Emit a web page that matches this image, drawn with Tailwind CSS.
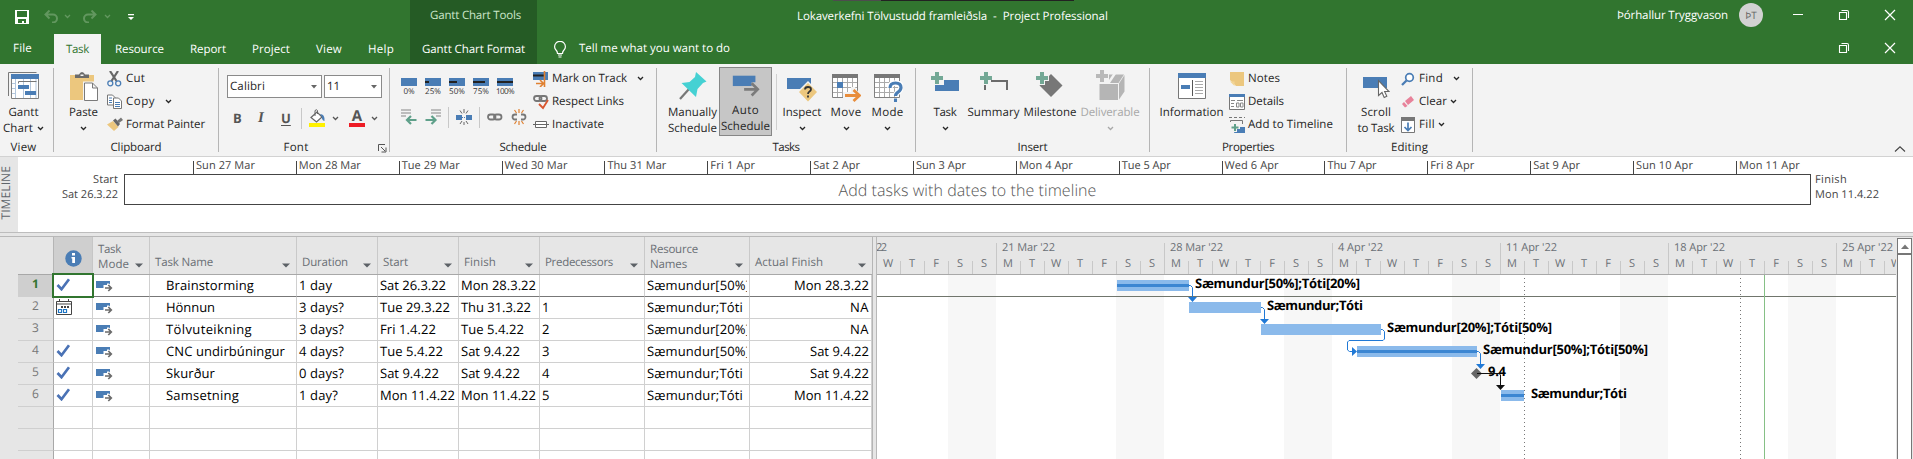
<!DOCTYPE html>
<html lang="en">
<head>
<meta charset="utf-8">
<title>Lokaverkefni Tölvustudd framleiðsla - Project Professional</title>
<script src="https://cdn.jsdelivr.net/npm/@tailwindcss/browser@4"></script>
</head>
<body class="w-[1913px] h-[459px] overflow-hidden flex flex-col bg-white font-['Open_Sans','Noto_Sans',sans-serif] text-[11.5px] leading-4 text-[#262626] whitespace-nowrap [text-rendering:geometricPrecision]">

<svg class="hidden">
  <symbol id="chev" viewBox="0 0 7 5"><path d="M1 1l2.5 2.5L6 1" fill="none" stroke="currentColor" stroke-width="1.3"/></symbol>
  <symbol id="restore" viewBox="0 0 12 12"><path d="M1.5 3.5h7v7h-7zM3.5 1.5h5.500q1.500 0 1.500 1.500V9" fill="none" stroke="#fff" stroke-width="1.1"/></symbol>
  <symbol id="close" viewBox="0 0 12 12"><path d="M1 1l10 10M11 1L1 11" fill="none" stroke="#fff" stroke-width="1.2"/></symbol>
  <symbol id="mode" viewBox="0 0 17 12"><path d="M0 1h14v7H0z" fill="#4a7db5"/><path d="M7.500 5h3.500V3.500h2L17.500 8.500 14 13H9V10H7.500z" fill="#fff"/><path d="M9 8h6M12.300 5l3 3-3 3" fill="none" stroke="#6b6b6b" stroke-width="1.700"/></symbol>
  <symbol id="check" viewBox="0 0 15 13"><path d="M1.500 7l4 4.200L13 1.300" fill="none" stroke="#4a72b5" stroke-width="2.700"/></symbol>
</svg>

<!-- Title bar and tabs -->
<header class="relative flex flex-col h-16 shrink-0 bg-[#31752f] text-white">
  <div class="absolute left-[833px] top-0 w-[48px] h-px bg-[#4d4d4d]"></div>
  <div class="absolute left-[881px] top-0 w-[193px] h-px bg-[#222]"></div>
  <div class="flex h-[34px]">
    <div class="flex w-[410px] pl-[15px] pt-[10px]">
      <svg class="w-[14px] h-[14px]" viewBox="0 0 14 14"><path d="M0 0h14v14H0z" fill="#fff"/><path d="M2 1h10v6H2zM3 9h8v4H9v-2H7v2H3z" fill="#31752f"/></svg>
      <svg class="w-[15px] h-[13px] ml-[15px]" viewBox="0 0 15 13"><path d="M5.500.5L1.500 4.500l4 4M1.500 4.500H9a4 4 0 0 1 0 8H8" fill="none" stroke="#62975f" stroke-width="2"/></svg>
      <svg class="w-[7px] h-[5px] ml-[5px] mt-1 text-[#62975f]"><use href="#chev"/></svg>
      <svg class="w-[15px] h-[13px] ml-[11px]" viewBox="0 0 15 13"><path d="M9.500.5l4 4-4 4M13.500 4.500H6a4 4 0 0 0 0 8h1" fill="none" stroke="#62975f" stroke-width="2"/></svg>
      <svg class="w-[7px] h-[5px] ml-[7px] mt-1 text-[#62975f]"><use href="#chev"/></svg>
      <svg class="w-[6px] h-[7px] ml-[17px] mt-1" viewBox="0 0 6 7"><path d="M0 0h6v1.200H0zM0 3h6L3 6z" fill="#fff"/></svg>
    </div>
    <div class="w-[127px] bg-[#255b25] pl-5 pt-2 text-[#cbe6ca]"><span data-w="90">Gantt Chart Tools</span></div>
    <div class="w-[1080px] pl-[260px] pt-[9px] flex"><span data-w="189">Lokaverkefni Tölvustudd framleiðsla</span><span class="ml-[6px]">-</span><span class="ml-[6px]" data-w="104">Project Professional</span></div>
    <div class="flex pt-[3px]">
      <span class="pt-[5px] w-[122px]"><span data-w="110">Þórhallur Tryggvason</span></span>
      <div class="size-6 rounded-full bg-[#d2d2d2] text-[#666] text-[10px] leading-6 text-center">ÞT</div>
      <div class="w-[10px] h-px bg-white mt-[11px] ml-[30px]"></div>
      <svg class="size-3 ml-[35px] mt-[6px]"><use href="#restore"/></svg>
      <svg class="size-3 ml-[34px] mt-[6px]"><use href="#close"/></svg>
    </div>
  </div>
  <div class="flex h-[30px]">
    <div class="w-[54px] pl-[13px] pt-[7px]"><span data-w="18">File</span></div>
    <div class="w-[47px] pl-3 pt-2 bg-[#f3f3f3] text-[#31752f]"><span data-w="22">Task</span></div>
    <div class="w-[75px] pl-[14px] pt-2"><span data-w="48">Resource</span></div>
    <div class="w-[62px] pl-[14px] pt-2"><span data-w="35">Report</span></div>
    <div class="w-[64px] pl-[14px] pt-2"><span data-w="37">Project</span></div>
    <div class="w-[52px] pl-[14px] pt-2"><span data-w="25">View</span></div>
    <div class="w-[56px] pl-[14px] pt-2"><span data-w="25">Help</span></div>
    <div class="w-[127px] pl-3 pt-2 bg-[#255b25]"><span data-w="102">Gantt Chart Format</span></div>
    <svg class="w-3 h-[17px] ml-[17px] mt-[7px]" viewBox="0 0 12 17"><path d="M3.500 12.500Q3.500 10.500 2 9 .6 7.500.6 5.700a5.200 5.200 0 0 1 10.800 0Q11.400 7.500 10 9 8.500 10.500 8.500 12.500zM4 14h4M4.500 16h3" fill="none" stroke="#fff" stroke-width="1.200"/></svg>
    <div class="ml-[13px] pt-[7px] w-[1260px]"><span data-w="150">Tell me what you want to do</span></div>
    <svg class="size-3 mt-[8px] -ml-px"><use href="#restore"/></svg>
    <svg class="size-3 ml-[34px] mt-[8px]"><use href="#close"/></svg>
  </div>
</header>

<!-- Ribbon -->
<section class="relative flex h-[93px] shrink-0 bg-[#f3f3f3] border-b border-[#d2d2d2]">
  <!-- View -->
  <div class="w-[53px] flex flex-col">
    <div class="flex flex-col w-[47px] h-[76px] items-center pt-[7px]">
      <svg class="w-[32px] h-[34px]" viewBox="0 0 32 34"><path d="M.5 25V1.500h28" fill="none" stroke="#7a7a7a"/><path d="M3.500 3.500h27v24h-27z" fill="#fff" stroke="#808080"/><path d="M3 3h28v5H3z" fill="#4a7db5"/><path d="M7.500 8v19M4 12.500h4M4 17.500h4M4 22.500h4M15.500 8v19M22.500 8v19M28 8v19" stroke="#b3c7dd" fill="none"/><path d="M10.500 12.500v-2h18" fill="none" stroke="#777"/><path d="M10 14h11v4H10zM17 20h11v4H17z" fill="#4a7db5"/></svg>
      <span data-w="29">Gantt</span>
      <span class="flex"><span data-w="29">Chart</span><svg class="w-[7px] h-[5px] ml-1 mt-[5px]"><use href="#chev"/></svg></span>
    </div>
    <div class="w-[47px] text-center"><span data-w="25">View</span></div>
  </div>
  <div class="w-px h-[84px] mt-1 bg-[#b5b5b5]"></div>
  <!-- Clipboard -->
  <div class="w-[164px] flex flex-col">
    <div class="flex h-[76px]">
      <div class="flex flex-col w-[53px] pl-[6px] items-center pt-[7px]">
        <svg class="w-[30px] h-[34px]" viewBox="0 0 30 34"><path d="M1 4h24v25H1z" fill="#ecc77e"/><path d="M6 7V3.500h4Q11 1 13 1t3 2.500h4V7z" fill="#6b6b6b"/><path d="M11.500 3.500h3v1.500h-3z" fill="#f3f3f3"/><path d="M14 10.500h14v20H14z" fill="#f3f3f3"/><path d="M15.500 12h8l5 5v12.500h-13zM23.500 12v5h5" fill="#fff" stroke="#7a7a7a"/></svg>
        <span data-w="28">Paste</span>
        <svg class="w-[7px] h-[5px] mt-[5px]"><use href="#chev"/></svg>
      </div>
      <div class="flex flex-col pt-[3px]">
        <div class="flex h-[23px] items-center"><svg class="w-[15px] h-[16px] mr-1" viewBox="0 0 15 16"><path d="M3 0l6.500 10M11 0L4.500 10" stroke="#666" stroke-width="2.200" fill="none"/><circle cx="3.300" cy="12.300" r="2.500" fill="none" stroke="#4a7db5" stroke-width="1.300"/><circle cx="11.200" cy="12.300" r="2.500" fill="none" stroke="#4a7db5" stroke-width="1.300"/></svg><span data-w="18">Cut</span></div>
        <div class="flex h-[23px] items-center"><svg class="w-[15px] h-[15px] mr-1" viewBox="0 0 15 15"><path d="M.5 1h5L8 3.500V11H.5z" fill="#fff" stroke="#777"/><path d="M6.500 4h5l3 3v7.500h-8z" fill="#fff" stroke="#777"/><path d="M2 4h3M2 6.500h3M2 8.500h3M8 8.500h5M8 10.500h5M8 12.500h5" stroke="#4a7db5"/></svg><span data-w="28">Copy</span><svg class="w-[7px] h-[5px] ml-[10px]"><use href="#chev"/></svg></div>
        <div class="flex h-[23px] items-center"><svg class="w-[16px] h-[15px] mr-[3px]" viewBox="0 0 16 15"><path d="M0 7.500l6-3.500 5.500 6L7 14z" fill="#ecc77e"/><path d="M6 3.500l2.500-2L13 7l-2 2.500z" fill="#666"/><path d="M10 4l4-3.500L16 3l-4 3z" fill="#777"/></svg><span data-w="78">Format Painter</span></div>
      </div>
    </div>
    <div class="text-center"><span data-w="50">Clipboard</span></div>
  </div>
  <div class="w-px h-[84px] mt-1 bg-[#b5b5b5]"></div>
  <!-- Font -->
  <div class="w-[170px] flex flex-col">
    <div class="flex flex-col h-[76px] pl-2 pt-[11px]">
      <div class="flex gap-[2px]">
        <div class="flex items-center justify-between w-[95px] h-[23px] border border-[#8a8a8a] bg-white pl-[2px] pr-1"><span data-w="34">Calibri</span><svg class="w-[6px] h-[4px]" viewBox="0 0 6 4"><path d="M0 0h6L3 3.500z" fill="#666"/></svg></div>
        <div class="flex items-center justify-between w-[58px] h-[23px] border border-[#8a8a8a] bg-white pl-[2px] pr-1"><span data-w="12">11</span><svg class="w-[6px] h-[4px]" viewBox="0 0 6 4"><path d="M0 0h6L3 3.500z" fill="#666"/></svg></div>
      </div>
      <div class="flex mt-[9px] h-[22px] text-[#555] items-center">
        <span class="w-[25px] pl-[6px] font-bold text-[13px]">B</span>
        <span class="w-[24px] pl-[6px] font-['Liberation_Serif',serif] font-bold italic text-[15px]">I</span>
        <span class="w-[25px] pl-[5px] font-bold text-[13px] underline underline-offset-2">U</span>
        <div class="w-px h-[21px] bg-[#c8c8c8]"></div>
        <svg class="w-[17px] h-[18px] ml-[7px]" viewBox="0 0 17 18"><path d="M2 8.500L8 3l5 5-5.500 5z" fill="#fff" stroke="#666" stroke-width="1.200"/><path d="M6 7V1.500q2-1.500 2.500 0V5" fill="none" stroke="#666"/><path d="M11 5q5 0 4.500 7-3-1-2.500-4z" fill="#4a7db5"/><path d="M0 14h16v4H0z" fill="#fff100"/></svg>
        <svg class="w-[7px] h-[5px] ml-[6px]"><use href="#chev"/></svg>
        <div class="flex flex-col items-center w-4 h-[18px] ml-[10px] border-b-4 border-[#ee1c25] font-bold text-[15px] leading-[15px]">A</div>
        <svg class="w-[7px] h-[5px] ml-[6px]"><use href="#chev"/></svg>
      </div>
    </div>
    <div class="flex"><div class="w-[154px] text-center"><span data-w="24">Font</span></div><svg class="w-[9px] h-[9px] ml-[5px] mt-1" viewBox="0 0 9 9"><path d="M.5 7V.5H7M3 3l4 4M8 3.500V8H3.500" fill="none" stroke="#555"/></svg></div>
  </div>
  <div class="w-px h-[84px] mt-1 bg-[#b5b5b5]"></div>
  <!-- Schedule -->
  <div class="w-[266px] flex flex-col">
    <div class="flex h-[76px]">
      <div class="w-[143px] pl-[11px] pt-[14px]">
        <div class="flex gap-2 h-[20px]" id="pct"></div>
        <div class="flex items-center mt-[8px] h-[22px]">
          <svg class="w-4 h-4" viewBox="0 0 16 16"><path d="M0 1h10M0 4h10M0 7h5" stroke="#888" stroke-width="1.200"/><path d="M15.500 11H6M10 7l-4 4 4 4" fill="none" stroke="#5fa08a" stroke-width="2.200"/></svg>
          <svg class="w-4 h-4 ml-2" viewBox="0 0 16 16"><path d="M6 1h10M6 4h10M11 7h5" stroke="#888" stroke-width="1.200"/><path d="M.5 11H10M6.500 7l4 4-4 4" fill="none" stroke="#5fa08a" stroke-width="2.200"/></svg>
          <div class="w-px h-[21px] bg-[#c8c8c8] ml-[7px]"></div>
          <svg class="w-4 h-4 ml-[7px]" viewBox="0 0 16 16"><path d="M0 6h6v5H0zM10 6h6v5h-6z" fill="#4a7db5"/><path d="M6 8.500h4" stroke="#4a7db5" stroke-dasharray="1 1"/><path d="M8 0v4M4 1.500l2 3M12 1.500l-2 3M8 16v-3M4 15l2-3M12 15l-2-3" stroke="#666"/></svg>
          <div class="w-px h-[21px] bg-[#c8c8c8] ml-[7px]"></div>
          <svg class="w-4 h-4 ml-[7px]" viewBox="0 0 16 16"><rect x="1" y="5.500" width="7.500" height="5" rx="2.500" fill="none" stroke="#777" stroke-width="1.800"/><rect x="7" y="5.500" width="7.500" height="5" rx="2.500" fill="none" stroke="#777" stroke-width="1.800"/></svg>
          <svg class="w-4 h-4 ml-2" viewBox="0 0 16 16"><path d="M6 5.500H4a2.500 2.500 0 0 0 0 5h2M10 5.500h2a2.500 2.500 0 0 1 0 5h-2" fill="none" stroke="#777" stroke-width="1.800"/><path d="M8 0v4M3.500 1l2 3M12.500 1l-2 3M8 16v-4M3.500 15l2-3M12.500 15l-2-3" stroke="#e08030" stroke-width="1.200"/></svg>
        </div>
      </div>
      <div class="flex flex-col pt-[3px]">
        <div class="flex h-[23px] items-center"><svg class="w-4 h-4 mr-[3px]" viewBox="0 0 16 16"><path d="M0 1h15v8H0z" fill="#4a7db5"/><path d="M0 4.500h12" stroke="#222" stroke-width="2"/><path d="M11.500 0v16M3 12.500h7M7 9l3.500 3.500L7 16" fill="none" stroke="#e08030" stroke-width="1.600"/></svg><span data-w="74">Mark on Track</span><svg class="w-[7px] h-[5px] ml-[10px]"><use href="#chev"/></svg></div>
        <div class="flex h-[23px] items-center"><svg class="w-4 h-4 mr-[3px]" viewBox="0 0 16 16"><rect x="1" y="2" width="7.500" height="5" rx="2.500" fill="none" stroke="#777" stroke-width="1.800"/><rect x="6.500" y="2" width="7.500" height="5" rx="2.500" fill="none" stroke="#777" stroke-width="1.800"/><path d="M6 10l4 4 5-8" fill="none" stroke="#d9562f" stroke-width="1.800"/></svg><span data-w="71">Respect Links</span></div>
        <div class="flex h-[23px] items-center"><svg class="w-4 h-4 mr-[3px]" viewBox="0 0 16 16"><path d="M0 7.500h16M2.500 4.500h11v6h-11z" fill="#fff" stroke="#666"/><path d="M2.500 7.500h11" stroke="#666"/></svg><span data-w="51">Inactivate</span></div>
      </div>
    </div>
    <div class="text-center"><span data-w="46">Schedule</span></div>
  </div>
  <div class="w-px h-[84px] mt-1 bg-[#b5b5b5]"></div>
  <!-- Tasks -->
  <div class="w-[258px] flex flex-col">
    <div class="flex h-[76px] pl-[9px]">
      <div class="flex flex-col w-[53px] items-center pt-[7px]">
        <svg class="w-[28px] h-[34px]" viewBox="0 0 28 34"><path d="M1 28L10 18" stroke="#777" stroke-width="2.200"/><path d="M17 1L27.500 10.500 24 12 18.500 18 17 26 2.500 12 10.500 11 16 6z" fill="#45d1d3"/></svg>
        <span data-w="48">Manually</span><span data-w="48">Schedule</span>
      </div>
      <div class="flex flex-col w-[53px] h-[69px] mt-[3px] items-center pt-[3px] border border-[#868686] bg-[#c6c6c6]">
        <svg class="w-[28px] h-[34px]" viewBox="0 0 28 34"><path d="M0 5h24v11H0z" fill="#4a7db5"/><path d="M11 16h9v-4h5v5H11z" fill="#c6c6c6"/><path d="M12 19.500h14M20 13l6.500 6.500L20 26" fill="none" stroke="#7b7b7b" stroke-width="2.800"/></svg>
        <span data-w="26">Auto</span><span data-w="48">Schedule</span>
      </div>
      <div class="w-px h-[56px] mt-[10px] ml-1 bg-[#d0d0d0]"></div>
      <div class="flex flex-col w-[50px] items-center pt-[7px]">
        <svg class="w-[30px] h-[34px]" viewBox="0 0 30 34"><path d="M0 7h24v11H0z" fill="#4a7db5"/><path d="M21 10l11 11-11 11-11-11z" fill="#f3f3f3"/><path d="M21 12l9 9-9 9.500-9-9.500z" fill="#ecc77e"/><path d="M18 18.500q0-2.500 3-2.500t3 2.300q0 1.300-1.500 2.200T21 23M21 24.500v2" fill="none" stroke="#333" stroke-width="1.800"/></svg>
        <span data-w="38">Inspect</span><svg class="w-[7px] h-[5px] mt-[5px]"><use href="#chev"/></svg>
      </div>
      <div class="flex flex-col w-[38px] items-center pt-[7px]">
        <svg class="w-[30px] h-[34px]" viewBox="0 0 30 34"><path d="M1.500 5.500h25v21h-25z" fill="#fff" stroke="#808080"/><path d="M1 3h26v4H1z" fill="#777"/><path d="M6.500 7v19M11.500 7v19M16.500 7v19M21.500 7v19M2 11.500h24M2 16.500h24M2 21.500h24" stroke="#aaa"/><path d="M6 11h6v6H6z" fill="#4a7db5"/><path d="M12 21h8v-5h4l5 8-5 7h-5v-4h-7z" fill="#f3f3f3"/><path d="M14 24.500h14M22.500 19l6 5.500-6 5.500" fill="none" stroke="#e88d3c" stroke-width="2.800"/></svg>
        <span data-w="30">Move</span><svg class="w-[7px] h-[5px] mt-[5px]"><use href="#chev"/></svg>
      </div>
      <div class="flex flex-col w-[45px] items-center pt-[7px]">
        <svg class="w-[30px] h-[34px]" viewBox="0 0 30 34"><path d="M1.500 5.500h25v21h-25z" fill="#fff" stroke="#808080"/><path d="M1 3h26v4H1z" fill="#777"/><path d="M6.500 7v19M11.500 7v19M16.500 7v19M21.500 7v19M2 11.500h24M2 16.500h24M2 21.500h24" stroke="#aaa"/><path d="M17 17q0-5 5.500-5t5.500 4.500q0 2.500-2.800 4.500T22.500 25M22.500 27v4" fill="none" stroke="#fff" stroke-width="5.500"/><path d="M17 17q0-5 5.500-5t5.500 4.500q0 2.500-2.800 4.500T22.500 25M22.500 27.500v3.500" fill="none" stroke="#4a7db5" stroke-width="3.200"/></svg>
        <span data-w="31">Mode</span><svg class="w-[7px] h-[5px] mt-[5px]"><use href="#chev"/></svg>
      </div>
    </div>
    <div class="text-center"><span data-w="26">Tasks</span></div>
  </div>
  <div class="w-px h-[84px] mt-1 bg-[#b5b5b5]"></div>
  <!-- Insert -->
  <div class="w-[233px] flex flex-col">
    <div class="flex h-[76px] pl-[8px]">
      <div class="flex flex-col w-[42px] items-center pt-[7px]">
        <svg class="w-[30px] h-[34px]" viewBox="0 0 30 34"><path d="M5 9h24v11H5z" fill="#4a7db5"/><path d="M5 9h9v5H5z" fill="#f3f3f3"/><path d="M5 1h4v4h4v4H9v4H5V9H1V5h4z" fill="#73a895"/></svg>
        <span data-w="22">Task</span><svg class="w-[7px] h-[5px] mt-[5px]"><use href="#chev"/></svg>
      </div>
      <div class="flex flex-col w-[55px] items-center pt-[7px]">
        <svg class="w-[30px] h-[34px]" viewBox="0 0 30 34"><path d="M6 19v-9h22v9" fill="none" stroke="#6b6b6b" stroke-width="2"/><path d="M3 0h9v14H3z" fill="#f3f3f3"/><path d="M5 1h4v4h4v4H9v4H5V9H1V5h4z" fill="#73a895"/><path d="M5 14h2v5H5z" fill="#6b6b6b"/></svg>
        <span data-w="51">Summary</span>
      </div>
      <div class="flex flex-col w-[58px] items-center pt-[7px]">
        <svg class="w-[30px] h-[34px]" viewBox="0 0 30 34"><path d="M16 3l11.500 11.500L16 26 4.500 14.500z" fill="#777"/><path d="M4 0h6v4h4v6h-4v4H3V0z" fill="#f3f3f3"/><path d="M5 1h4v4h4v4H9v4H5V9H1V5h4z" fill="#73a895"/></svg>
        <span data-w="52">Milestone</span>
      </div>
      <div class="flex flex-col w-[62px] items-center pt-[5px] text-[#a8a8a8]">
        <svg class="w-[30px] h-[36px]" viewBox="0 0 30 36"><path d="M4.500 14l5.500-8.500h19l-5.500 8.500zM4.500 15h18.500v16H4.500zM24 14.500l5.500-8.500v16.500L24 30.500z" fill="#b5b5b5"/><path d="M12 14l6-9h3l-6 9z" fill="#f3f3f3"/><path d="M0 0h14v14H2z" fill="#f3f3f3"/><path d="M5 1h4v4h4v4H9v4H5V9H1V5h4z" fill="#b9b9b9"/></svg>
        <span data-w="58">Deliverable</span><svg class="w-[7px] h-[5px] mt-[5px]"><use href="#chev"/></svg>
      </div>
    </div>
    <div class="text-center"><span data-w="29">Insert</span></div>
  </div>
  <div class="w-px h-[84px] mt-1 bg-[#b5b5b5]"></div>
  <!-- Properties -->
  <div class="w-[196px] flex flex-col">
    <div class="flex h-[76px] pl-[8px]">
      <div class="flex flex-col w-[67px] items-center pt-[7px]">
        <svg class="w-[28px] h-[34px]" viewBox="0 0 28 34"><path d="M.5 2.500h27v25H.5z" fill="#fff" stroke="#777"/><path d="M0 2h28v5H0z" fill="#4a7db5"/><path d="M3 14h9v4H3z" fill="#4a7db5"/><path d="M14.500 9v16" stroke="#555"/><path d="M17 10.500h8M17 13.500h8M17 16.500h8M17 19.500h8M17 22.500h8" stroke="#aaa"/></svg>
        <span data-w="63">Information</span>
      </div>
      <div class="flex flex-col pt-[3px] pl-1">
        <div class="flex h-[23px] items-center"><svg class="w-4 h-4 mr-[3px]" viewBox="0 0 16 16"><path d="M1 1h14v14H7l-6-6z" fill="#ecc77e"/><path d="M1 10.500h4.500V15z" fill="#f2d597"/></svg><span data-w="31">Notes</span></div>
        <div class="flex h-[23px] items-center"><svg class="w-4 h-4 mr-[3px]" viewBox="0 0 16 16"><path d="M.5.5h15v15H.5z" fill="#fff" stroke="#777"/><path d="M0 0h16v3H0z" fill="#4a7db5"/><path d="M2 6.500h4M8 6.500h6M2 9.500h3M2 12.500h3M7.500 9h2.500v4H7.500zM11.500 9H14v4h-2.500z" fill="none" stroke="#888"/></svg><span data-w="35">Details</span></div>
        <div class="flex h-[23px] items-center"><svg class="w-4 h-4 mr-[3px]" viewBox="0 0 16 16"><path d="M0 .5h16" stroke="#777" stroke-dasharray="3 2"/><path d="M1.500 5V3.500h12V7" fill="none" stroke="#777"/><path d="M7 10h9v6H5z" fill="#4a7db5"/><path d="M4 5h4v3h3v4H8v3H4v-3H1V8h3z" fill="#f3f3f3"/><path d="M5 7h2v2.500h2.500v2H7V14H5v-2.500H2.500v-2H5z" fill="#5fa08a"/></svg><span data-w="84">Add to Timeline</span></div>
      </div>
    </div>
    <div class="text-center"><span data-w="51">Properties</span></div>
  </div>
  <div class="w-px h-[84px] mt-1 bg-[#b5b5b5]"></div>
  <!-- Editing -->
  <div class="w-[125px] flex flex-col">
    <div class="flex h-[76px] pl-[8px]">
      <div class="flex flex-col w-[42px] items-center pt-[7px]">
        <svg class="w-[28px] h-[34px]" viewBox="0 0 28 34"><path d="M1 6h24v11H1z" fill="#4a7db5"/><path d="M16.500 9.500v15l3.500-3 2.200 5 2.600-1.200-2.200-4.800H27z" fill="#fff" stroke="#666" stroke-width="1.100"/></svg>
        <span data-w="29">Scroll</span><span data-w="36">to Task</span>
      </div>
      <div class="flex flex-col pt-[3px] pl-1">
        <div class="flex h-[23px] items-center"><svg class="w-[14px] h-[14px] mr-1" viewBox="0 0 14 14"><circle cx="8.500" cy="5.500" r="3.800" fill="#fff" stroke="#4a7db5" stroke-width="1.700"/><path d="M5.500 8.500L1 13" stroke="#4a7db5" stroke-width="2.300"/></svg><span data-w="23">Find</span><svg class="w-[7px] h-[5px] ml-[10px]"><use href="#chev"/></svg></div>
        <div class="flex h-[23px] items-center"><svg class="w-[14px] h-[14px] mr-1" viewBox="0 0 14 14"><path d="M4 6l6-5 3 4-6 5z" fill="#e8829a"/><path d="M3 7l3.500 4-2.500 1.500L1 9z" fill="#e8829a"/></svg><span data-w="27">Clear</span><svg class="w-[7px] h-[5px] ml-[3px]"><use href="#chev"/></svg></div>
        <div class="flex h-[23px] items-center"><svg class="w-[14px] h-[16px] mr-1" viewBox="0 0 14 16"><path d="M.5.5h13v15H.5z" fill="#fff" stroke="#777"/><path d="M0 0h14v4H0z" fill="#777"/><path d="M7 5.500v8M3.500 10L7 13.500 10.500 10" fill="none" stroke="#4a7db5" stroke-width="1.700"/></svg><span data-w="15">Fill</span><svg class="w-[7px] h-[5px] ml-[3px]"><use href="#chev"/></svg></div>
      </div>
    </div>
    <div class="text-center"><span data-w="36">Editing</span></div>
  </div>
  <div class="w-px h-[84px] mt-1 bg-[#b5b5b5]"></div>
  <svg class="w-[12px] h-[6px] mt-[82px] ml-[421px]" viewBox="0 0 12 6"><path d="M1 5.500L6 .8l5 4.700" fill="none" stroke="#444" stroke-width="1.100"/></svg>
</section>

<!-- Timeline -->
<section class="flex h-[76px] shrink-0 border-b border-[#bdbdbd] text-[#444] text-[11px]">
  <div class="w-[18px] bg-[#e6e6e6] flex items-start justify-center pt-[9px] pr-[7px]">
    <span class="[writing-mode:vertical-rl] rotate-180 text-[12px] leading-[14px] tracking-[0.1px] text-[#5f656b]">TIMELINE</span>
  </div>
  <div class="w-[106px] pt-[15px] pr-[6px] text-right leading-[15px]"><div><span data-w="24">Start</span></div><div><span data-w="55">Sat 26.3.22</span></div></div>
  <div class="w-[1687px] flex flex-col">
    <div id="ticks" class="flex h-[17px] pl-[69px] pt-1"></div>
    <div class="h-[31px] border border-[#444] text-center text-[#555] font-light text-[16px] leading-[31px]"><span data-w="257">Add tasks with dates to the timeline</span></div>
  </div>
  <div class="pt-[15px] pl-1 leading-[15px]"><div><span data-w="31">Finish</span></div><div><span data-w="63">Mon 11.4.22</span></div></div>
</section>
<div class="h-[4px] shrink-0 bg-[#e6e6e6] border-b border-[#b8b8b8]"></div>

<!-- Sheet and chart -->
<main class="flex h-[222px] shrink-0">
  <div class="w-[18px] bg-[#e6e6e6]"></div>
  <div class="relative w-[855px] border-r border-[#b5b5b5] overflow-hidden">
    <div id="head" class="grid grid-cols-[36px_39px_57px_147px_81px_81px_81px_105px_105px_122px] h-[38px] bg-[#e6e6e6] border-b border-[#a8a8a8] text-[#6a6f75] leading-[15px]"></div>
    <div id="rows"></div>
    <div class="absolute left-[34px] top-[36px] w-[42px] h-[25px] border-2 border-[#31752f]"></div>
  </div>
  <div class="w-[4px] bg-[#e6e6e6] border-r border-[#b8b8b8]"></div>
  <div class="w-[1019px] flex flex-col overflow-hidden">
    <div class="h-[38px] shrink-0 bg-[#e6e6e6] border-b border-[#a8a8a8]"><svg id="scale" class="block w-[1019px] h-[37px] text-[11px]" viewBox="877 237 1019 37" fill="#6a6f75"></svg></div>
    <svg id="chart" class="block w-[1019px] h-[184px] shrink-0" viewBox="877 275 1019 184"></svg>
  </div>
  <div class="w-[17px] pl-px pt-[1px] bg-[#e6e6e6]">
    <div class="w-[15px] h-[16px] border border-[#777] bg-white flex justify-center items-center"><svg class="w-[8px] h-[5px]" viewBox="0 0 8 5"><path d="M0 5h8L4 .5z" fill="#777"/></svg></div>
    <div class="w-[15px] h-[205px] border border-b-0 border-[#777] bg-white"></div>
  </div>
</main>

<script>
const $ = id => document.getElementById(id);

$("pct").innerHTML = [["0%",0,10],["25%",4,15],["50%",8,15],["75%",12,15],["100%",16,17]].map(([t,b,w]) =>
  `<div class="flex flex-col items-center w-4"><svg class="w-4 h-2 shrink-0" viewBox="0 0 16 8"><path d="M0 0h16v8H0z" fill="#4a7db5"/><path d="M0 3h${b}v2H0z" fill="#222"/></svg><span class="text-[8px] leading-[11px] text-[#333]" data-w="${w}">${t}</span></div>`).join("");

$("ticks").innerHTML = [["Sun 27 Mar",58],["Mon 28 Mar",61],["Tue 29 Mar",57],["Wed 30 Mar",62],["Thu 31 Mar",58],["Fri 1 Apr",44],["Sat 2 Apr",46],["Sun 3 Apr",49],["Mon 4 Apr",53],["Tue 5 Apr",48],["Wed 6 Apr",53],["Thu 7 Apr",48],["Fri 8 Apr",43],["Sat 9 Apr",46],["Sun 10 Apr",56],["Mon 11 Apr",60]].map(([t,w]) =>
  `<div class="w-[102.87px] shrink-0 border-l border-[#444] pl-[2px] leading-[9px]"><span data-w="${w}">${t}</span></div>`).join("");

const arrow = `<svg class="w-[8px] h-[5px] mb-[6px] mr-[6px] shrink-0" viewBox="0 0 8 5"><path d="M0 .5h8L4 4.500z" fill="#5c6166"/></svg>`;
$("head").innerHTML = `<div class="border-r border-[#b5b5b5]"></div><div class="border-r border-[#c6c6c6] bg-[#cfcfcf] flex justify-center pt-[13px]"><svg class="w-[17px] h-[17px]" viewBox="0 0 17 17"><circle cx="8.500" cy="8.500" r="8.200" fill="#4a7db5"/><path d="M7 3h3v2.500H7zM6.500 7H10v6H7.200V8.500h-.7z" fill="#fff"/></svg></div>` +
 [["Task",22,"Mode",30],["Task Name",57],["Duration",45],["Start",24],["Finish",31],["Predecessors",67],["Resource",47,"Names",36],["Actual Finish",67]].map(([a,w,b,v]) =>
  `<div class="border-r border-[#c9c9c9] last:border-r-0 flex justify-between items-end pl-[5px]"><div class="${b ? "pb-[2px]" : "pb-[4px]"}"><div><span data-w="${w}">${a}</span></div>${b ? `<div><span data-w="${v}">${b}</span></div>` : ""}</div>${arrow}</div>`).join("");

const cal = `<svg class="w-4 h-4 mb-[2px]" viewBox="0 0 16 16"><path d="M.5 2.500h15v13H.5zM.5 5h15M3.500 0v3M12.500 0v3" fill="#fff" stroke="#444"/><path d="M5 7h2v2H5zM8 7h2v2H8zM11 7h2v2h-2z" fill="#444"/><path d="M2.500 10.500h3v3h-3zM7.500 10.500h3v3h-3z" fill="none" stroke="#1c74c4" stroke-width="1.200"/></svg>`;
const chk = `<svg class="w-[15px] h-[13px] mb-[2px]"><use href="#check"/></svg>`;
const data = [
 [chk,"Brainstorming",87,"1 day",32,"Sat 26.3.22",65,"Mon 28.3.22",74,"","Sæmundur[50%]",102,"Mon 28.3.22",74],
 [cal,"Hönnun",48,"3 days?",44,"Tue 29.3.22",69,"Thu 31.3.22",69,"1","Sæmundur;Tóti",95,"NA",18],
 ["","Tölvuteikning",85,"3 days?",44,"Fri 1.4.22",55,"Tue 5.4.22",62,"2","Sæmundur[20%]",102,"NA",18],
 [chk,"CNC undirbúningur",118,"4 days?",44,"Tue 5.4.22",62,"Sat 9.4.22",58,"3","Sæmundur[50%]",102,"Sat 9.4.22",58],
 [chk,"Skurður",48,"0 days?",44,"Sat 9.4.22",58,"Sat 9.4.22",58,"4","Sæmundur;Tóti",95,"Sat 9.4.22",58],
 [chk,"Samsetning",72,"1 day?",38,"Mon 11.4.22",74,"Mon 11.4.22",74,"5","Sæmundur;Tóti",95,"Mon 11.4.22",74],
 [],[],[]];
const s = (t,w) => t ? `<span data-w="${w}">${t}</span>` : "";
$("rows").innerHTML = data.map((r,i) => {
  const c = i ? "flex items-center border-r border-b border-[#d0d0d0] pl-[2px] overflow-hidden" : "flex items-center border-r border-b border-r-[#d0d0d0] border-b-[#777] pl-[2px] overflow-hidden";
  return `<div class="grid grid-cols-[36px_39px_57px_147px_81px_81px_81px_105px_105px_122px] h-[22px] text-[13px] text-black">
  <div class="${i ? "bg-[#e6e6e6] text-[#777]" : "bg-[#cfcfcf] text-[#31752f] font-bold"} border-r border-b border-r-[#a8a8a8] border-b-[#cfcfcf] text-center text-[12px] leading-[18px]">${r.length ? i+1 : ""}</div>
  <div class="${c}">${r[0]||""}</div>
  <div class="${c}">${r.length ? `<svg class="w-[17px] h-[12px] ml-[1px]"><use href="#mode"/></svg>` : ""}</div>
  <div class="${c} pb-px"><div class="pl-[14px]">${s(r[1],r[2])}</div></div>
  <div class="${c} pb-px">${s(r[3],r[4])}</div><div class="${c} pb-px">${s(r[5],r[6])}</div><div class="${c} pb-px">${s(r[7],r[8])}</div>
  <div class="${c} pb-px">${r[9]||""}</div><div class="${c} pr-[2px] pb-px"><div class="overflow-hidden w-[100px]">${s(r[10],r[11])}</div></div>
  <div class="${c} justify-end pr-[2px] pb-px">${s(r[12],r[13])}</div></div>`;
}).join("");

// Time scale: one day is 24px, weeks begin on Monday
let h = `<text x="876" y="251" textLength="11">22</text>`;
for (let i = 0; i < 43; i++) {
  const x = 876 + i*24, d = (i+2) % 7;
  h += `<path d="M${x+.5} ${d ? 261 : 243}V274" stroke="#c8c8c8"/><text x="${x+12}" y="267" text-anchor="middle">${"MTWTFSS"[d]}</text>`;
}
[[996,"21 Mar '22",53],[1164,"28 Mar '22",53],[1332,"4 Apr '22",45],[1500,"11 Apr '22",51],[1668,"18 Apr '22",51],[1836,"25 Apr '22",51]].forEach(([x,t,w]) =>
  h += `<text x="${x+6}" y="251" textLength="${w}">${t}</text>`);
$("scale").innerHTML = h;

let g = "";
for (let x = 948; x < 1896; x += 168) g += `<path d="M${x} 275h48v184h-48z" fill="#f7f7f7"/>`;
g += `<path d="M877 296.500H1896" stroke="#70756c"/>`;
[[1117,1189,0,1],[1189,1261,1,0],[1261,1381,2,0],[1357,1477,3,1],[1501,1524,5,1]].forEach(([a,b,r,p]) => {
  const y = 280 + r*22;
  g += `<path d="M${a} ${y}H${b}v11H${a}z" fill="#8bbaeb"/>` + (p ? `<path d="M${a} ${y+4}H${b}v3H${a}z" fill="#3c86d2"/>` : "");
});
g += `<g fill="none" stroke="#2079d6"><path d="M1189 285.500h1.500l2 2V298M1261 307.500h1.500l2 2V320M1381 329.500h1.500l2 2V339l-1.500 1.500H1349l-1.500 1.500v8l2 1.500H1353M1477 351.500h1.500l2 2V365"/></g>
<path d="M1188 297h9l-4.500 5zM1260 319h9l-4.500 5zM1352 347v9l5-4.500zM1476 364h9l-4.500 5z" fill="#2079d6"/>
<path d="M1476.500 368l5.500 5.500-5.500 5.500-5.500-5.500z" fill="#666"/>`;
g += `<g font-weight="700" font-size="13">` + [[1195,0,"Sæmundur[50%];Tóti[20%]",165],[1267,1,"Sæmundur;Tóti",96],[1387,2,"Sæmundur[20%];Tóti[50%]",165],[1483,3,"Sæmundur[50%];Tóti[50%]",165],[1488,4,"9.4",18],[1531,5,"Sæmundur;Tóti",96]].map(([x,r,t,w]) =>
 `<text x="${x}" y="${288+r*22}" textLength="${w}">${t}</text>`).join("") + `</g>`;
g += `<path d="M1477 373.500H1499l1.500 1.500V386" fill="none" stroke="#111"/><path d="M1496 385h9l-4.500 5z" fill="#111"/>
<path d="M1524.500 278V459M1740.500 278V459" stroke="#777" stroke-dasharray="1 3"/><path d="M1764.500 275V459" stroke="#86c086"/>`;
$("chart").innerHTML = g;

function fit() {
  const all = [...document.querySelectorAll("[data-w]")];
  all.forEach(e => { e.style.display = "inline-block"; e.style.letterSpacing = "0px"; });
  const widths = all.map(e => e.getBoundingClientRect().width);
  all.forEach((e, i) => {
    e.style.letterSpacing = ((+e.dataset.w + 1 - widths[i]) / e.textContent.length).toFixed(3) + "px";
  });
}
fit();
addEventListener("load", fit);
document.fonts.ready.then(fit);
new ResizeObserver(fit).observe(document.body);
</script>
</body>
</html>
